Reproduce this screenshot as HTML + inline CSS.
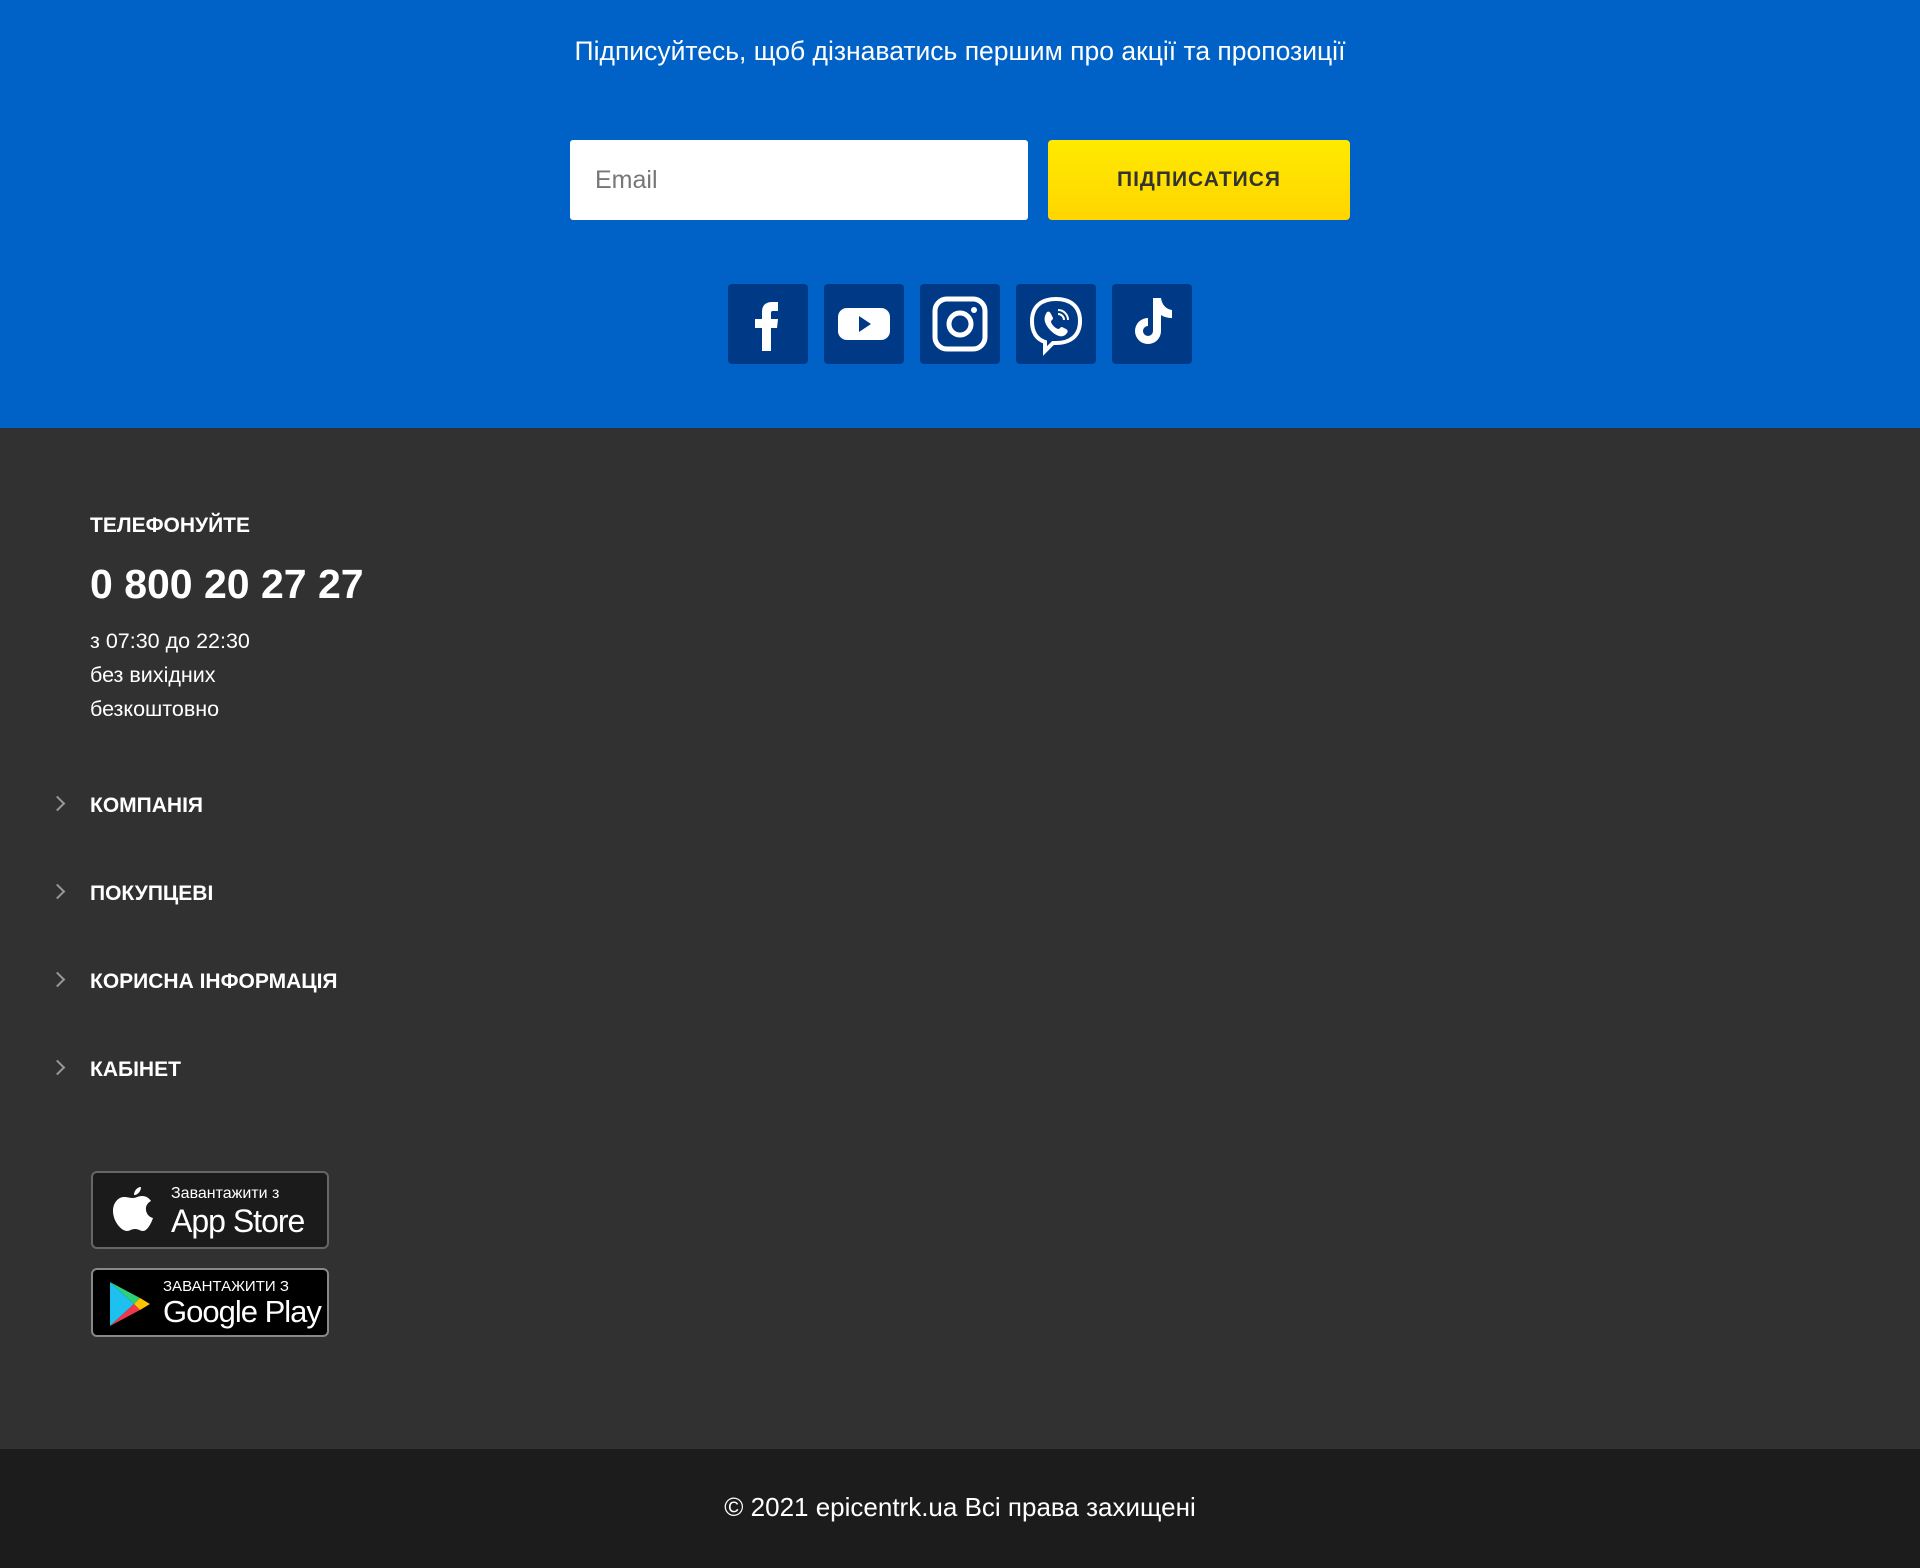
<!DOCTYPE html>
<html><head><meta charset="utf-8"><style>
*{margin:0;padding:0;box-sizing:border-box}
body{width:1920px;height:1568px;font-family:"Liberation Sans",sans-serif;background:#313131;position:relative;overflow:hidden}
.blue{position:absolute;left:0;top:0;width:1920px;height:428px;background:#0062c6}
.tag{position:absolute;top:36px;left:0;width:1920px;text-align:center;color:#fff;font-size:26.5px}
.inp{position:absolute;left:570px;top:140px;width:458px;height:80px;background:#fff;border-radius:3px;color:#777;font-size:25px;padding:26px 0 0 25px}
.btn{position:absolute;left:1048px;top:140px;width:302px;height:80px;border-radius:4px;background:linear-gradient(#ffea00,#ffd500);color:#333;font-weight:bold;font-size:21px;text-align:center;line-height:80px;letter-spacing:1px}
.soc{position:absolute;top:284px;width:80px;height:80px;background:#003a87;border-radius:4px}
.soc svg{position:absolute;left:0;top:0}
.w{position:absolute;color:#fff}
.h{left:90px;font-weight:bold;font-size:21px}
.m{left:90px;font-weight:bold;font-size:21px}
.chev{position:absolute;left:52px;width:11px;height:11px;border-right:2px solid #999;border-top:2px solid #999;transform:rotate(45deg)}
.badge{position:absolute;left:91px;width:238px;border:2px solid #666;border-radius:6px;color:#fff}
.foot{position:absolute;left:0;top:1449px;width:1920px;height:119px;background:#1c1c1c;color:#fff;font-size:26px;text-align:center;line-height:116px}
</style></head><body>
<div class="blue">
<div class="tag">Підписуйтесь, щоб дізнаватись першим про акції та пропозиції</div>
<div class="inp">Email</div>
<div class="btn">ПІДПИСАТИСЯ</div>
<div class="soc" style="left:728px"><svg width="80" height="80"><path d="M34 67V44h-7v-9h7v-7c0-7 4-10 10-10h6v9h-5c-2 0-2 1-2 3v5h7l-1 9h-6v23z" fill="#fff"/></svg></div>
<div class="soc" style="left:824px"><svg width="80" height="80"><rect x="14" y="24" width="52" height="32" rx="9" fill="#fff"/><path d="M35 32l12 8-12 8z" fill="#003a87"/></svg></div>
<div class="soc" style="left:920px"><svg width="80" height="80"><rect x="15" y="15" width="50" height="50" rx="12" fill="none" stroke="#fff" stroke-width="5"/><circle cx="40" cy="40" r="11" fill="none" stroke="#fff" stroke-width="5"/><circle cx="54" cy="26" r="3" fill="#fff"/></svg></div>
<div class="soc" style="left:1016px"><svg width="80" height="80"><path d="M40 15c14 0 24 7 24 22s-10 22-24 22h-3l-8 8v-9c-9-3-13-10-13-21 0-15 10-22 24-22z" fill="none" stroke="#fff" stroke-width="4"/><path d="M31 28c2-1 3 0 4 2l2 4c0 2-2 2-2 4 1 3 4 6 7 7 2 0 2-2 4-2l4 2c2 1 2 3 1 4-2 3-5 4-8 3-6-2-12-8-14-14-1-4 0-7 2-10z" fill="#fff"/><path d="M42 26a10 10 0 0 1 10 10M42 30a6 6 0 0 1 6 6" stroke="#fff" stroke-width="2" fill="none"/></svg></div>
<div class="soc" style="left:1112px"><svg width="80" height="80"><path d="M41 14h8c1 7 5 11 11 12v8c-4 0-8-1-11-3v16a13 13 0 1 1-13-13v8a5 5 0 1 0 5 5z" fill="#fff"/></svg></div>
</div>
<div class="w h" style="top:514px">ТЕЛЕФОНУЙТЕ</div>
<div class="w" style="left:90px;top:561px;font-size:41px;font-weight:bold">0 800 20 27 27</div>
<div class="w" style="left:90px;top:624px;font-size:21.5px;line-height:34px">з 07:30 до 22:30<br>без вихідних<br>безкоштовно</div>
<div class="chev" style="top:798px"></div><div class="w m" style="top:794px">КОМПАНІЯ</div>
<div class="chev" style="top:886px"></div><div class="w m" style="top:882px">ПОКУПЦЕВІ</div>
<div class="chev" style="top:974px"></div><div class="w m" style="top:970px">КОРИСНА ІНФОРМАЦІЯ</div>
<div class="chev" style="top:1062px"></div><div class="w m" style="top:1058px">КАБІНЕТ</div>
<div class="badge" style="top:1171px;height:78px;background:#1b1b1b">
<svg width="44" height="50" style="position:absolute;left:18px;top:12px" viewBox="0 0 44 50"><path d="M30 2c0 4-3 8-7 8 0-4 3-8 7-8zM22 13c3 0 5-2 9-2 4 0 7 2 9 5-8 4-6 15 2 17-2 6-6 13-10 13-3 0-4-2-8-2s-5 2-8 2C10 46 2 36 2 26c0-9 6-14 11-14 4 0 6 1 9 1z" fill="#fff"/></svg>
<div style="position:absolute;left:78px;top:12px;font-size:16px">Завантажити з</div>
<div style="position:absolute;left:78px;top:30px;font-size:32px;letter-spacing:-1px">App Store</div>
</div>
<div class="badge" style="top:1268px;height:69px;background:#000;border-color:#888">
<svg width="44" height="48" style="position:absolute;left:15px;top:10px" viewBox="0 0 44 48"><path d="M2 2l24 22L2 46z" fill="#1ec0f0"/><path d="M2 2l30 16-6 6z" fill="#2fd07a"/><path d="M2 46l30-16-6-6z" fill="#f0384a"/><path d="M32 18l10 6-10 6-6-6z" fill="#ffc400"/></svg>
<div style="position:absolute;left:70px;top:8px;font-size:15px">ЗАВАНТАЖИТИ З</div>
<div style="position:absolute;left:70px;top:24px;font-size:31px;letter-spacing:-1px">Google Play</div>
</div>
<div class="foot">© 2021 epicentrk.ua Всі права захищені</div>
</body></html>
